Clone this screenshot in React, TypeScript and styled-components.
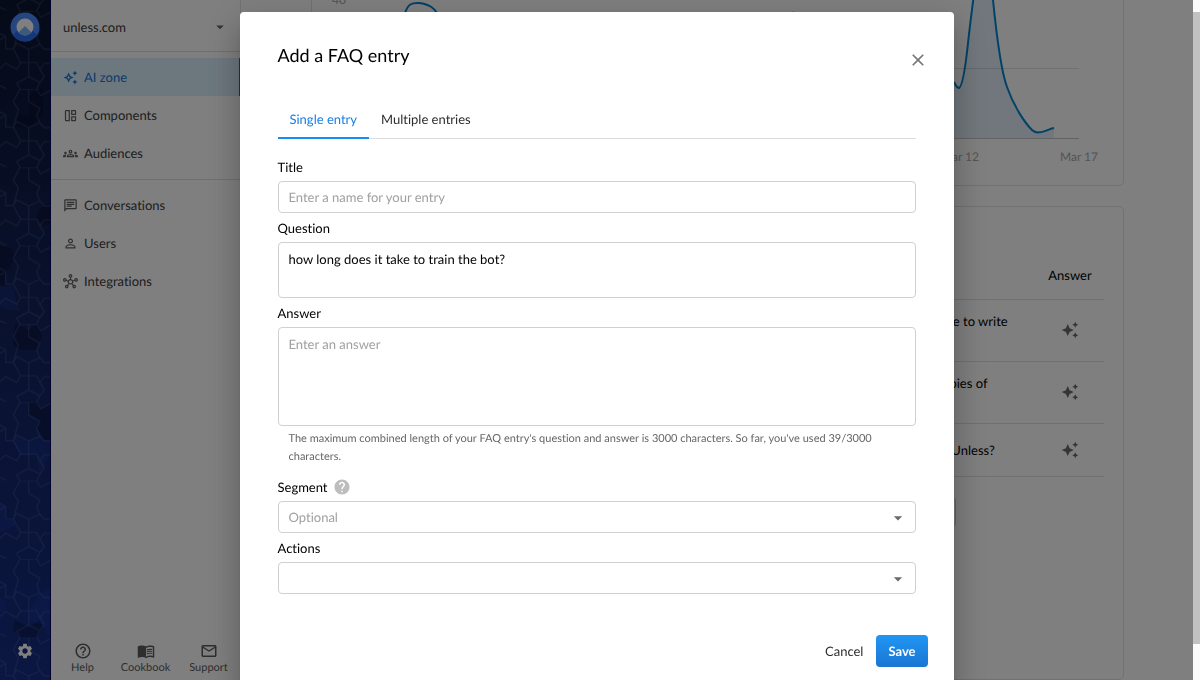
import React from "react";
import styled, { createGlobalStyle } from "styled-components";
import {
  MdOutlineAutoAwesome,
  MdAutoAwesome,
  MdOutlineAutoAwesomeMosaic,
  MdOutlineGroups,
  MdOutlineChat,
  MdPersonOutline,
  MdOutlineHub,
  MdHelpOutline,
  MdHelp,
  MdMenuBook,
  MdMailOutline,
  MdSettings,
  MdArrowDropDown,
  MdClose,
} from "react-icons/md";

const GlobalStyle = createGlobalStyle`
  * { box-sizing: border-box; }
  body {
    margin: 0;
    overflow: hidden;
    font-family: Lato, "Liberation Sans", sans-serif;
    font-size: 13px;
    line-height: 18px;
    font-variant-ligatures: none;
    text-rendering: geometricPrecision;
    color: #000;
    background: #fff;
  }
  button, input, select, textarea {
    font: inherit;
    font-variant-ligatures: none;
    text-rendering: inherit;
    color: inherit;
  }
  button { border: 0; padding: 0; background: none; cursor: pointer; }
`;

/* ---------- application behind the dialog ---------- */

const Shell = styled.div`
  display: flex;
  height: 100vh;
  overflow: hidden;
`;

const Rail = styled.aside`
  position: relative;
  flex: 0 0 51px;
  display: flex;
  flex-direction: column;
  align-items: center;
  justify-content: space-between;
  padding: 12px 0 20px;
  color: #fff;
  background: linear-gradient(#0b1530, #13245f 50%, #162e85);
  border-right: 1px solid #00005a;
`;

const RailPattern = styled.svg`
  position: absolute;
  inset: 0;
  width: 100%;
  height: 100%;
`;

const RailLink = styled.a`
  position: relative;
  display: flex;
  color: inherit;
`;

const Sidebar = styled.nav`
  flex: 0 0 190px;
  display: flex;
  flex-direction: column;
  border-right: 1px solid #e6e6e6;
`;

const SiteSwitch = styled.button`
  display: flex;
  align-items: center;
  justify-content: space-between;
  height: 52px;
  padding: 2px 11px 0 12px;
  border-bottom: 1px solid #dedede;
  color: #3c3c3c;
  svg {
    fill: #666;
  }
`;

const NavGroup = styled.div`
  padding: 6px 0 7px;
  & + & {
    border-top: 1px solid #dedede;
  }
`;

const NavLink = styled.a<{ $active?: boolean }>`
  display: flex;
  align-items: center;
  gap: 6px;
  height: 38px;
  padding-left: 12px;
  text-decoration: none;
  color: ${(p) => (p.$active ? "#1976d2" : "#3c3c3c")};
  background: ${(p) => (p.$active ? "#dbeefd" : "transparent")};
  border-right: ${(p) => (p.$active ? "1px solid #1976d2" : "0")};
  svg {
    width: 15px;
    height: 15px;
    fill: ${(p) => (p.$active ? "#1976d2" : "#606060")};
  }
`;

const HelpBar = styled.div`
  margin-top: auto;
  display: flex;
  padding-bottom: 5px;
`;

const HelpLink = styled.a`
  display: flex;
  flex-direction: column;
  align-items: center;
  flex: 1;
  gap: 1px;
  font-size: 11px;
  line-height: 14px;
  text-decoration: none;
  color: #5c5c5c;
`;

const Main = styled.main`
  flex: 1;
  min-width: 0;
  display: flex;
  flex-direction: column;
  gap: 20px;
  padding: 0 76px 0 70px;
`;

const Card = styled.section`
  border: 1px solid #e2e2e2;
  border-radius: 5px;
`;

const ChartCard = styled(Card)`
  border-top: 0;
  border-radius: 0 0 5px 5px;
  svg {
    display: block;
    width: 100%;
  }
  text {
    font-size: 12px;
    fill: #a8a8a8;
  }
`;

const TableCard = styled(Card)`
  flex: 1;
  display: flex;
  flex-direction: column;
  align-items: flex-end;
  padding: 44px 19px 0;
`;

const Questions = styled.table`
  width: 168px;
  border-collapse: collapse;
  th {
    height: 48px;
    padding: 0;
    font-weight: 400;
  }
  td {
    height: 62px;
    padding: 12px 0;
    vertical-align: top;
  }
  tr:last-child td {
    height: 53px;
    padding: 17px 0;
  }
  th,
  td {
    border-bottom: 1px solid #e0e0e0;
  }
  th:last-child,
  td:last-child {
    width: 68px;
    text-align: center;
    vertical-align: middle;
  }
  svg {
    display: block;
    margin: 0 auto;
    fill: #6a6a6a;
  }
`;

const MoreButton = styled.button`
  align-self: flex-end;
  width: 60px;
  height: 30px;
  margin: 20px 148px 0 0;
  border: 1px solid #a8cdf5;
  border-radius: 4px;
`;

/* ---------- dialog ---------- */

const Overlay = styled.div`
  position: fixed;
  inset: 0;
  display: flex;
  background: rgba(0, 0, 0, 0.5);
`;

const Scroller = styled.div`
  flex: 1;
  min-width: 0;
  overflow: hidden;
  padding: 12px 24px 0;
`;

const ScrollTrack = styled.div`
  flex: 0 0 7px;
  padding: 12px 0 36px;
  background: #fafafa;
  display: flex;
`;

const ScrollThumb = styled.div`
  flex: 1;
  background: #c1c1c1;
`;

const Dialog = styled.div`
  max-width: 714px;
  margin: 0 auto;
  padding: 30px 38px 26px;
  border-radius: 4px;
  background: #fff;
  box-shadow: 0 9px 12px -6px rgba(0, 0, 0, 0.2), 0 19px 30px 2px rgba(0, 0, 0, 0.14),
    0 7px 36px 6px rgba(0, 0, 0, 0.12);
`;

const DialogHeader = styled.header`
  display: flex;
  justify-content: space-between;
  margin-bottom: 23px;
`;

const DialogTitle = styled.h1`
  margin: 0;
  font-size: 18px;
  font-weight: 400;
  line-height: 26px;
`;

const CloseButton = styled.button`
  display: flex;
  align-items: center;
  height: 36px;
  margin-right: -12px;
  color: #777;
`;

const Tabs = styled.div`
  display: flex;
  border-bottom: 1px solid #dcdcdc;
  margin-bottom: 19px;
`;

const Tab = styled.button<{ $active?: boolean }>`
  height: 38px;
  margin-bottom: -1px;
  padding: 0 12px;
  color: ${(p) => (p.$active ? "#1a7fe6" : "#2e2e2e")};
  border-bottom: 2px solid ${(p) => (p.$active ? "#1a8cf5" : "transparent")};
`;

const Field = styled.div`
  & + & {
    margin-top: 6px;
  }
`;

const LabelRow = styled.div`
  display: flex;
  align-items: center;
  gap: 5px;
  height: 18px;
  margin-bottom: 5px;
  svg {
    fill: #bdbdbd;
  }
`;

const Control = styled.input`
  display: block;
  width: 100%;
  height: 32px;
  padding: 0 10px;
  border: 1px solid #d0d0d0;
  border-radius: 4px;
  background: #fff;
  outline: 0;
  &::placeholder {
    color: #a0a0a0;
    opacity: 1;
  }
`;

const Area = styled(Control).attrs({ as: "textarea" })<{ $height: number }>`
  height: ${(p) => p.$height}px;
  padding: 7px 10px;
  resize: none;
`;

const SelectBox = styled.div`
  position: relative;
  svg {
    position: absolute;
    right: 8px;
    top: 7px;
    pointer-events: none;
    fill: #6a6a6a;
  }
`;

const Select = styled(Control).attrs({ as: "select" })`
  appearance: none;
  color: #a0a0a0;
`;

const Helper = styled.p`
  margin: 4px 11px 12px;
  font-size: 11px;
  line-height: 18px;
  color: #666;
`;

const Actions = styled.footer`
  display: flex;
  justify-content: flex-end;
  align-items: center;
  gap: 13px;
  margin: 41px -12px 0 0;
`;

const CancelButton = styled.button`
  color: #2e2e2e;
`;

const SaveButton = styled.button`
  height: 32px;
  padding: 0 12px;
  border-radius: 4px;
  font-weight: 700;
  color: #fff;
  background: linear-gradient(#2196f3, #1976d2);
`;

function Chart() {
  return (
    <svg viewBox="0 0 811 185" role="img" aria-label="Daily visits">
      <path d="M28 68.500H767" stroke="#e0e0e0" />
      <path d="M28 138.500H767" stroke="#c4c4c4" />
      <text x="20" y="4">40</text>
      <path
        d="M642 82C644 86 645 88 647 88C651 86 654 62 656 43C659 16 661 2 663 -14H679L681 0C684 30 688 68 695 87C702 107 713 123 720 130C726 136 736 129 742 128V138H642Z"
        fill="#1976c8"
        fillOpacity="0.12"
      />
      <path
        d="M92 16C96 2 101 3 107 3C116 4 124 7 128 20M480 16L481 12L482 16M642 82C644 86 645 88 647 88C651 86 654 62 656 43C659 16 661 2 663 -14M679 -14L681 0C684 30 688 68 695 87C702 107 713 123 720 130C726 136 736 129 742 128"
        fill="none"
        stroke="#0284cf"
        strokeWidth="2"
      />
      <text x="648" y="161" textAnchor="middle">Mar 12</text>
      <text x="767" y="161" textAnchor="middle">Mar 17</text>
    </svg>
  );
}

function Pattern() {
  return (
    <RailPattern aria-hidden="true">
      <defs>
        <pattern
          id="cells"
          width="156"
          height="235"
          y="32"
          patternUnits="userSpaceOnUse"
          patternTransform="scale(0.3333)"
        >
          <path
            d="M60 0H110L122 20L156 2M60 0L40 38L55 62L40 115M86 0V38L120 58L110 78L120 103M0 68L17 78L0 88M17 78V115H40L50 98L86 116L120 101L133 116H156M0 173L17 158L50 176L62 156L40 115M62 156H110L120 178M156 158H133L120 176L133 198L120 215L86 198L50 218L60 235M86 198V116M0 225L17 233V235M120 215L110 235"
            fill="none"
            stroke="#8c9ad8"
            strokeOpacity="0.18"
            strokeWidth="4"
          />
        </pattern>
      </defs>
      <g fill="#04081a" fillOpacity="0.3">
        <path d="M20 115H29V95L43 88V115L28 128L13 126Z" />
        <path d="M0 246L11 248L15 257L5 275V285H0Z" />
        <path d="M15 323L28 330L38 323L42 336L36 350H20L13 345Z" />
        <path d="M51 202L40 209L37 217L43 225H51Z" />
        <path d="M29 402H37L41 409L51 404V440H44L37 428L40 421L29 414Z" />
        <path d="M15 620L28 627L40 620L43 628L37 638H20L13 630Z" />
      </g>
      <g fill="#2450e0" fillOpacity="0.16">
        <path d="M16 436L28 441L40 436L44 441H51V452L40 474L36 455H20L13 441Z" />
        <path d="M0 504L5 506V520H13L16 525L5 531H0Z" />
        <path d="M0 287L13 286L16 300L20 310H5L0 306Z" />
        <path d="M51 588L38 595L29 612V620L43 625L51 640Z" />
        <path d="M0 598L5 600V612H0Z" />
      </g>
      <rect width="100%" height="100%" fill="url(#cells)" />
    </RailPattern>
  );
}

function Logo() {
  return (
    <svg width="30" height="30" viewBox="0 0 30 30" aria-hidden="true">
      <circle cx="15" cy="15" r="14.500" fill="#4a8cff" />
      <path d="M3 23A14.500 14.500 0 0 0 27 23L21 17H9Z" fill="#2a6cf0" />
      <circle cx="15" cy="15" r="8.500" fill="#fff" />
      <path d="M15 14L8.500 20.500A8.500 8.500 0 0 0 21.500 20.500Z" fill="#7db4f5" />
    </svg>
  );
}

const primaryNav = [
  { label: "AI zone", Icon: MdOutlineAutoAwesome, active: true },
  { label: "Components", Icon: MdOutlineAutoAwesomeMosaic },
  { label: "Audiences", Icon: MdOutlineGroups },
];

const secondaryNav = [
  { label: "Conversations", Icon: MdOutlineChat },
  { label: "Users", Icon: MdPersonOutline },
  { label: "Integrations", Icon: MdOutlineHub },
];

const helpLinks = [
  { label: "Help", Icon: MdHelpOutline },
  { label: "Cookbook", Icon: MdMenuBook },
  { label: "Support", Icon: MdMailOutline },
];

const questions = ["able to write", "copies of", "to Unless?"];

export default function App() {
  return (
    <>
      <GlobalStyle />
      <Shell>
        <Rail>
          <Pattern />
          <RailLink href="#home" aria-label="Home">
            <Logo />
          </RailLink>
          <RailLink href="#settings" aria-label="Settings">
            <MdSettings size={18} />
          </RailLink>
        </Rail>
        <Sidebar>
          <SiteSwitch type="button">
            unless.com
            <MdArrowDropDown size={18} />
          </SiteSwitch>
          {[primaryNav, secondaryNav].map((group, i) => (
            <NavGroup key={i}>
              {group.map(({ label, Icon, active }: any) => (
                <NavLink key={label} href="#nav" $active={active}>
                  <Icon />
                  {label}
                </NavLink>
              ))}
            </NavGroup>
          ))}
          <HelpBar>
            {helpLinks.map(({ label, Icon }) => (
              <HelpLink key={label} href="#help">
                <Icon size={18} />
                {label}
              </HelpLink>
            ))}
          </HelpBar>
        </Sidebar>
        <Main>
          <ChartCard>
            <Chart />
          </ChartCard>
          <TableCard>
            <Questions>
              <thead>
                <tr>
                  <th />
                  <th>Answer</th>
                </tr>
              </thead>
              <tbody>
                {questions.map((q) => (
                  <tr key={q}>
                    <td>{q}</td>
                    <td>
                      <MdAutoAwesome size={18} />
                    </td>
                  </tr>
                ))}
              </tbody>
            </Questions>
            <MoreButton type="button" aria-label="More" />
          </TableCard>
        </Main>
      </Shell>

      <Overlay>
        <Scroller>
          <Dialog role="dialog" aria-modal="true" aria-labelledby="dialog-title">
            <DialogHeader>
              <DialogTitle id="dialog-title">Add a FAQ entry</DialogTitle>
              <CloseButton type="button" aria-label="Close">
                <MdClose size={20} />
              </CloseButton>
            </DialogHeader>
            <Tabs role="tablist">
              <Tab type="button" role="tab" aria-selected="true" $active>
                Single entry
              </Tab>
              <Tab type="button" role="tab" aria-selected="false">
                Multiple entries
              </Tab>
            </Tabs>
            <Field>
              <LabelRow>
                <label htmlFor="title">Title</label>
              </LabelRow>
              <Control id="title" placeholder="Enter a name for your entry" />
            </Field>
            <Field>
              <LabelRow>
                <label htmlFor="question">Question</label>
              </LabelRow>
              <Area id="question" $height={56} defaultValue="how long does it take to train the bot?" />
            </Field>
            <Field>
              <LabelRow>
                <label htmlFor="answer">Answer</label>
              </LabelRow>
              <Area id="answer" $height={99} placeholder="Enter an answer" />
              <Helper>
                The maximum combined length of your FAQ entry's question and answer is 3000 characters. So far,
                you've used 39/3000 characters.
              </Helper>
            </Field>
            <Field>
              <LabelRow>
                <label htmlFor="segment">Segment</label>
                <MdHelp size={18} />
              </LabelRow>
              <SelectBox>
                <Select id="segment">
                  <option>Optional</option>
                </Select>
                <MdArrowDropDown size={20} />
              </SelectBox>
            </Field>
            <Field>
              <LabelRow>
                <label htmlFor="actions">Actions</label>
              </LabelRow>
              <SelectBox>
                <Select id="actions" />
                <MdArrowDropDown size={20} />
              </SelectBox>
            </Field>
            <Actions>
              <CancelButton type="button">Cancel</CancelButton>
              <SaveButton type="button">Save</SaveButton>
            </Actions>
          </Dialog>
        </Scroller>
        <ScrollTrack>
          <ScrollThumb />
        </ScrollTrack>
      </Overlay>
    </>
  );
}
